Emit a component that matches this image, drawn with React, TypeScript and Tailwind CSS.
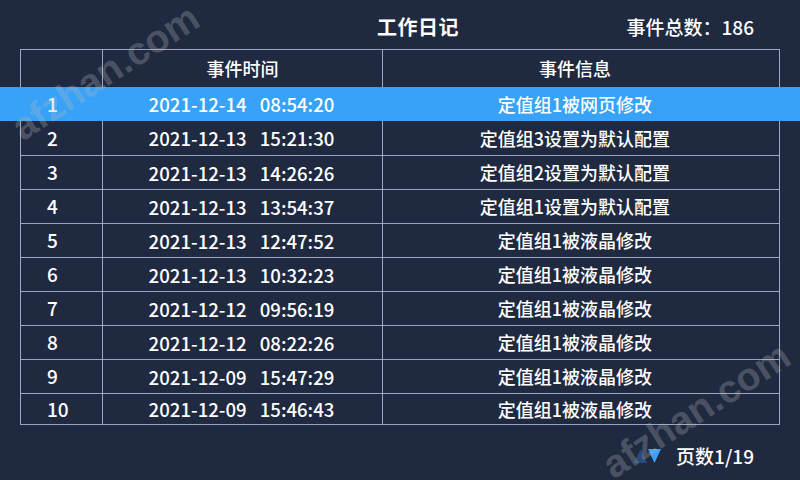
import React from "react";

const rows = [
  ["1", "2021-12-14", "08:54:20", "定值组1被网页修改"],
  ["2", "2021-12-13", "15:21:30", "定值组3设置为默认配置"],
  ["3", "2021-12-13", "14:26:26", "定值组2设置为默认配置"],
  ["4", "2021-12-13", "13:54:37", "定值组1设置为默认配置"],
  ["5", "2021-12-13", "12:47:52", "定值组1被液晶修改"],
  ["6", "2021-12-13", "10:32:23", "定值组1被液晶修改"],
  ["7", "2021-12-12", "09:56:19", "定值组1被液晶修改"],
  ["8", "2021-12-12", "08:22:26", "定值组1被液晶修改"],
  ["9", "2021-12-09", "15:47:29", "定值组1被液晶修改"],
  ["10", "2021-12-09", "15:46:43", "定值组1被液晶修改"],
];

const font = { fontFamily: '"Noto Sans CJK SC", "Noto Sans", sans-serif' };

export default function App() {
  return (
    <div
      className="relative w-[800px] h-[480px] overflow-hidden bg-[#1f2940] text-white flex flex-col"
      style={font}
    >
      {/* header */}
      <div className="h-[49px] flex items-center shrink-0">
        <div className="pl-[377px] text-[20px] font-bold tracking-[0.5px] leading-none pt-[4px]">
          工作日记
        </div>
        <div className="ml-auto pr-[46px] text-[19px] font-medium leading-none pt-[4px]">
          事件总数：186
        </div>
      </div>

      {/* table */}
      <div className="flex flex-col font-medium">
        <div className="px-[20px]">
          <div className="grid grid-cols-[82px_280px_398px] h-[38px] border-t border-[#9ea7bf]">
            <div className="border-l border-[#9ea7bf]" />
            <div className="border-l border-[#9ea7bf] flex items-center justify-center text-[18px]">
              事件时间
            </div>
            <div className="border-l border-r border-[#9ea7bf] flex items-center justify-center pr-[12px] text-[18px]">
              事件信息
            </div>
          </div>
        </div>
        {rows.map((r, i) => {
          const hi = i === 0;
          const last = i === rows.length - 1;
          const line = hi ? "border-transparent" : "border-[#9ea7bf]";
          return (
            <div key={r[0]} className={hi ? "bg-[#37a2f7] px-[20px]" : "px-[20px]"}>
              <div
                className={`grid grid-cols-[82px_280px_398px] text-[18px] ${
                  last ? "h-[32px] border-b" : "h-[34px]"
                } ${i > 1 ? "border-t" : ""} ${line}`}
              >
                <div className={`border-l ${line} flex items-center pl-[26px] text-[19px]`}>{r[0]}</div>
                <div className={`border-l ${line} flex items-center justify-center text-[18.6px] pr-[2px]`}>
                  <span>{r[1]}</span>
                  <span className="ml-[13px]">{r[2]}</span>
                </div>
                <div className={`border-l border-r ${line} flex items-center justify-center pr-[12px]`}>
                  {r[3]}
                </div>
              </div>
            </div>
          );
        })}
      </div>

      {/* footer */}
      <div className="flex-1 flex items-center justify-end pr-[46px] pt-[5px]">
        <svg width="28" height="15" viewBox="0 0 28 15" className="mr-[14px]">
          <polygon points="0,15 6.5,1 13,15" fill="#2b4a78" />
          <polygon points="14,1 27,1 20.5,15" fill="#3aa2f6" />
        </svg>
        <span className="text-[19px] font-medium leading-none">页数1/19</span>
      </div>

      {/* watermarks */}
      <div
        className="absolute left-[105px] top-[72px] -translate-x-1/2 -translate-y-1/2 -rotate-[33deg] text-[39px] font-bold text-[rgba(185,185,190,0.3)] whitespace-nowrap pointer-events-none leading-none"
        style={{ fontFamily: '"Liberation Sans", Arial, sans-serif' }}
      >
        afzhan.com
      </div>
      <div
        className="absolute left-[696px] top-[410px] -translate-x-1/2 -translate-y-1/2 -rotate-[33deg] text-[39px] font-bold text-[rgba(185,185,190,0.3)] whitespace-nowrap pointer-events-none leading-none"
        style={{ fontFamily: '"Liberation Sans", Arial, sans-serif' }}
      >
        afzhan.com
      </div>
    </div>
  );
}
